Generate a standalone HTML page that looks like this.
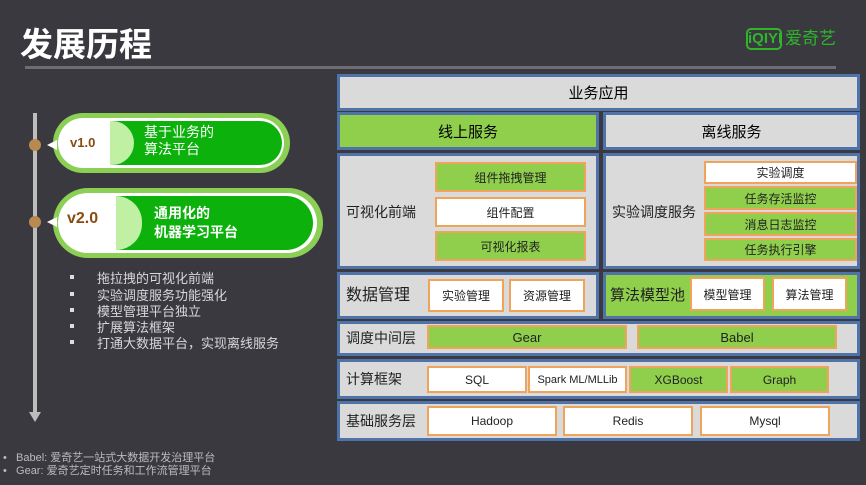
<!DOCTYPE html><html><head><meta charset="utf-8"><style>
*{margin:0;padding:0;box-sizing:border-box}
body{width:866px;height:485px;background:#3a3940;position:relative;overflow:hidden;font-family:"Liberation Sans","Noto Sans CJK SC",sans-serif}
.a{position:absolute}
.b{position:absolute;background:#dadada;border:3px solid #4f73a8;display:flex;align-items:center}
.i{position:absolute;border:2px solid #f0a35a;display:flex;align-items:center;justify-content:center;font-size:12px;color:#222}
.g{background:#8fcf4c}.w{background:#fff}
.lbl{position:absolute;font-size:14px;color:#222;line-height:16px}
.li{position:absolute;left:70px;font-size:13px;color:#d8d8d8}
.li:before{content:"";position:absolute;left:0;top:7px;width:4px;height:4px;background:#ddd}
.li span{position:absolute;left:27px;white-space:nowrap}
</style></head><body>
<div class="a" style="left:20px;top:22px;font-size:33px;font-weight:bold;color:#fff;font-family:'Noto Sans CJK SC',sans-serif;line-height:40px">发展历程</div>
<div class="a" style="left:25px;top:66px;width:811px;height:3px;background:#6e6d74"></div>
<div class="a" style="left:746px;top:28px;width:36px;height:22px;border:2px solid #2fb52a;border-radius:5px;color:#2fb52a;font-size:15px;font-weight:bold;line-height:18px;text-align:center">iQIYI</div>
<div class="a" style="left:785px;top:29px;color:#2fb52a;font-size:17px;line-height:20px">爱奇艺</div>

<div class="a" style="left:33px;top:113px;width:4px;height:300px;background:#bdbdbd"></div>
<div class="a" style="left:29px;top:412px;width:0;height:0;border-left:6px solid transparent;border-right:6px solid transparent;border-top:10px solid #bdbdbd"></div>
<div class="a" style="left:29px;top:139px;width:12px;height:12px;border-radius:50%;background:#b88a50"></div>
<div class="a" style="left:29px;top:216px;width:12px;height:12px;border-radius:50%;background:#b88a50"></div>

<div class="a" style="left:53px;top:113px;width:237px;height:60px;border-radius:30px;background:#8ccf55"></div>
<div class="a" style="left:58px;top:118px;width:226px;height:50px;border-radius:25px;background:#fff"></div>
<div class="a" style="left:110px;top:121px;width:172px;height:44px;border-radius:0 22px 22px 0;background:#0cb10c"></div>
<div class="a" style="left:110px;top:121px;width:24px;height:44px;border-radius:0 22px 22px 0;background:#bff0a4"></div>
<div class="a" style="left:47px;top:140px;border-top:5px solid transparent;border-bottom:5px solid transparent;border-right:10px solid #fff"></div>
<div class="a" style="left:70px;top:135px;font-size:13px;font-weight:bold;color:#8a4a10">v1.0</div>
<div class="a" style="left:144px;top:124px;font-size:14px;color:#fff;line-height:17px">基于业务的<br>算法平台</div>

<div class="a" style="left:53px;top:188px;width:270px;height:70px;border-radius:35px;background:#8ccf55"></div>
<div class="a" style="left:58px;top:193px;width:259px;height:60px;border-radius:30px;background:#fff"></div>
<div class="a" style="left:116px;top:196px;width:197px;height:54px;border-radius:0 27px 27px 0;background:#0cb10c"></div>
<div class="a" style="left:116px;top:196px;width:26px;height:54px;border-radius:0 27px 27px 0;background:#bff0a4"></div>
<div class="a" style="left:47px;top:217px;border-top:5px solid transparent;border-bottom:5px solid transparent;border-right:10px solid #fff"></div>
<div class="a" style="left:67px;top:210px;font-size:16px;font-weight:bold;color:#8a4a10">v2.0</div>
<div class="a" style="left:154px;top:204px;font-size:14px;font-weight:bold;color:#fff;line-height:19px">通用化的<br>机器学习平台</div>

<div class="li" style="top:268px"><span>拖拉拽的可视化前端</span></div>
<div class="li" style="top:285px"><span>实验调度服务功能强化</span></div>
<div class="li" style="top:301px"><span>模型管理平台独立</span></div>
<div class="li" style="top:317px"><span>扩展算法框架</span></div>
<div class="li" style="top:333px"><span>打通大数据平台，实现离线服务</span></div>

<div class="a" style="left:3px;top:452px;font-size:11px;color:#bbb;line-height:13px">•&nbsp;&nbsp; Babel: 爱奇艺一站式大数据开发治理平台<br>•&nbsp;&nbsp; Gear: 爱奇艺定时任务和工作流管理平台</div>

<div class="b" style="left:337px;top:74px;width:523px;height:37px;justify-content:center;font-size:15px">业务应用</div>
<div class="b g" style="left:337px;top:112px;width:262px;height:38px;justify-content:center;font-size:15px">线上服务</div>
<div class="b" style="left:603px;top:112px;width:257px;height:38px;justify-content:center;font-size:15px">离线服务</div>

<div class="b" style="left:337px;top:153px;width:262px;height:116px"></div>
<div class="lbl" style="left:346px;top:204px">可视化前端</div>
<div class="i g" style="left:435px;top:162px;width:151px;height:30px">组件拖拽管理</div>
<div class="i w" style="left:435px;top:197px;width:151px;height:30px">组件配置</div>
<div class="i g" style="left:435px;top:231px;width:151px;height:30px">可视化报表</div>

<div class="b" style="left:603px;top:153px;width:257px;height:116px"></div>
<div class="lbl" style="left:612px;top:204px">实验调度服务</div>
<div class="i w" style="left:704px;top:161px;width:153px;height:23px">实验调度</div>
<div class="i g" style="left:704px;top:186px;width:153px;height:24px">任务存活监控</div>
<div class="i g" style="left:704px;top:212px;width:153px;height:24px">消息日志监控</div>
<div class="i g" style="left:704px;top:238px;width:153px;height:23px">任务执行引擎</div>

<div class="b" style="left:337px;top:272px;width:262px;height:47px"></div>
<div class="lbl" style="left:346px;top:287px;font-size:16px;line-height:18px">数据管理</div>
<div class="i w" style="left:428px;top:279px;width:76px;height:33px">实验管理</div>
<div class="i w" style="left:509px;top:279px;width:76px;height:33px">资源管理</div>
<div class="b g" style="left:603px;top:272px;width:257px;height:47px"></div>
<div class="lbl" style="left:610px;top:287px;font-size:15px;line-height:18px">算法模型池</div>
<div class="i w" style="left:690px;top:277px;width:75px;height:34px">模型管理</div>
<div class="i w" style="left:772px;top:277px;width:75px;height:34px">算法管理</div>

<div class="b" style="left:337px;top:321px;width:523px;height:35px"></div>
<div class="lbl" style="left:346px;top:330px">调度中间层</div>
<div class="i g" style="left:427px;top:325px;width:200px;height:24px;font-size:13px">Gear</div>
<div class="i g" style="left:637px;top:325px;width:200px;height:24px;font-size:13px">Babel</div>

<div class="b" style="left:337px;top:359px;width:523px;height:40px"></div>
<div class="lbl" style="left:346px;top:371px">计算框架</div>
<div class="i w" style="left:427px;top:366px;width:100px;height:27px">SQL</div>
<div class="i w" style="left:528px;top:366px;width:99px;height:27px;font-size:11px">Spark ML/MLLib</div>
<div class="i g" style="left:629px;top:366px;width:99px;height:27px">XGBoost</div>
<div class="i g" style="left:730px;top:366px;width:99px;height:27px">Graph</div>

<div class="b" style="left:337px;top:401px;width:523px;height:40px"></div>
<div class="lbl" style="left:346px;top:413px">基础服务层</div>
<div class="i w" style="left:427px;top:406px;width:130px;height:30px">Hadoop</div>
<div class="i w" style="left:563px;top:406px;width:130px;height:30px">Redis</div>
<div class="i w" style="left:700px;top:406px;width:130px;height:30px">Mysql</div>
</body></html>
